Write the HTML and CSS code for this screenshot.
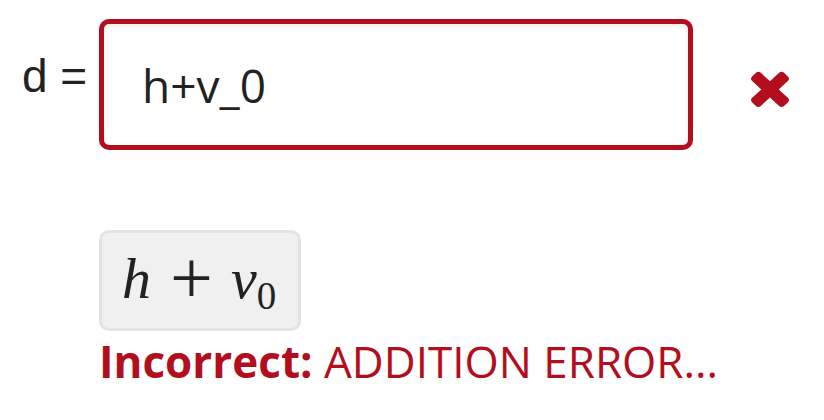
FILE: index.html
```html
<!DOCTYPE html>
<html lang="en">
<head>
    <meta charset="UTF-8">
    <title>Answer check</title>
    <link rel="stylesheet" href="styles.css">
</head>
<body>
    <div class="answer-row">
        <label class="answer-label" for="answer">d =</label>
        <input class="answer-input" type="text" id="answer" value="h+v_0">
        <span class="answer-status" aria-label="incorrect">
            <svg width="38" height="39" viewBox="110 238 1188 1316" preserveAspectRatio="none">
                <path fill="#b20e1d" d="M1298 1322q0 40-28 68l-136 136q-28 28-68 28t-68-28l-294-294-294 294q-28 28-68 28t-68-28l-136-136q-28-28-28-68t28-68l294-294-294-294q-28-28-28-68t28-68l136-136q28-28 68-28t68 28l294 294 294-294q28-28 68-28t68 28l136 136q28 28 28 68t-28 68l-294 294 294 294q28 28 28 68z"/>
            </svg>
        </span>
    </div>

    <div class="feedback">
        <div class="preview"><span class="mi">h</span><span class="mo">+</span><span class="mi">v</span><span class="mn">0</span></div>
        <p class="message"><strong>Incorrect:</strong> ADDITION ERROR...</p>
    </div>
</body>
</html>
```

FILE: styles.css
```css
/* Page */
body {
    margin: 0;
    font-family: "Open Sans", "Liberation Sans", sans-serif;
    color: #222;
    background: #fff;
}

/* Ligne de réponse */
.answer-row {
    display: flex;
    align-items: flex-start;
    padding: 19px 0 0 22px;
}

.answer-label {
    width: 77px;
    font-family: "Liberation Sans", Arial, sans-serif;
    font-size: 46px;
    line-height: 1;
    margin-top: 34px;
    white-space: nowrap;
}

.answer-input {
    width: 594px;
    height: 131px;
    box-sizing: border-box;
    padding: 0 0 0 38px;
    border: 5px solid #b20e1d;
    border-radius: 10px;
    box-shadow: inset 0 2px 4px rgba(0, 0, 0, 0.08);
    font-family: "Open Sans", "Liberation Sans", sans-serif;
    font-size: 46px;
    color: #222;
    outline: none;
}

.answer-status {
    display: flex;
    margin: 49px 0 0 58px;
}

/* Retour */
.feedback {
    margin: 80px 0 0 99px;
}

.preview {
    box-sizing: border-box;
    width: 202px;
    height: 101px;
    padding: 19px 0 0 20px;
    background: #f0f0f0;
    border: 3px solid #e3e3e3;
    border-radius: 10px;
    font-family: "Liberation Serif", "DejaVu Serif", serif;
    font-size: 55px;
    line-height: 55px;
    white-space: nowrap;
    color: #222;
}

.mi {
    font-size: 58px;
    font-style: italic;
    line-height: 0;
}

.mo {
    margin: 0 18px 0 19px;
    font-size: 76px;
    line-height: 0;
    vertical-align: -5px;
}

.mn {
    font-size: 39px;
    line-height: 0;
    vertical-align: -11px;
}

.message {
    margin: 4px 0 0;
    font-size: 44px;
    line-height: 1.2;
    color: #b20e1d;
}

.message strong {
    font-weight: 700;
}
```
